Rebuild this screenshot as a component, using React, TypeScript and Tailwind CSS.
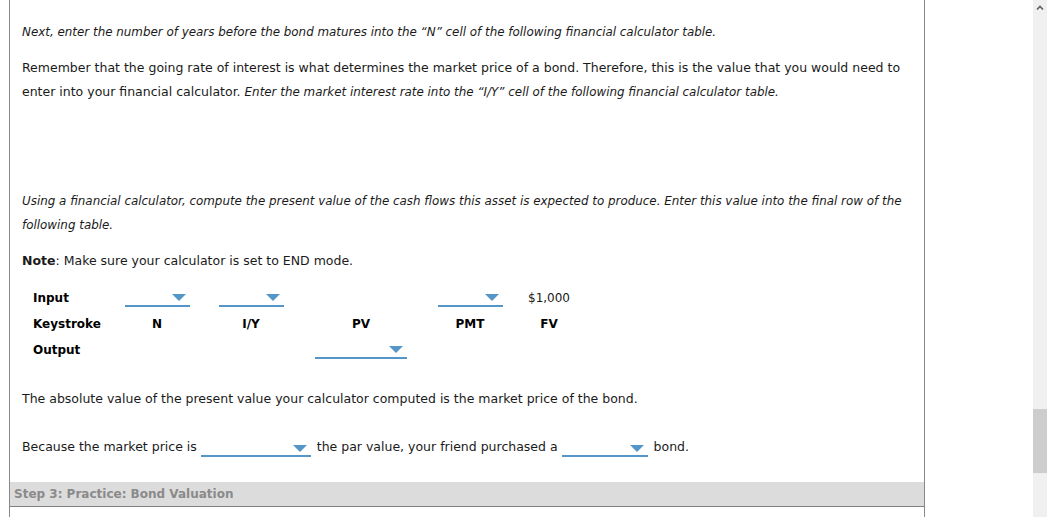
import React from 'react';

const font = { fontFamily: '"DejaVu Sans", Verdana, sans-serif' };

function Caret() {
  return (
    <svg width="14" height="7" viewBox="0 0 14 7" className="shrink-0">
      <path d="M0 0 H14 L7 7 Z" fill="#5596c9" />
    </svg>
  );
}

// blank select drawn as an underline with a caret on the right
function Blank({ width }: { width: string }) {
  return (
    <span className={`inline-flex items-start justify-end h-[17px] border-b-2 border-[#5596c9] pr-[4px] pt-[4px] align-[-5px] ${width}`}>
      <Caret />
    </span>
  );
}

function InlineBlank({ width }: { width: string }) {
  return (
    <span className={`flex items-start justify-end mt-[10px] h-[12px] border-b-2 border-[#5596c9] pr-[4px] ${width}`}>
      <Caret />
    </span>
  );
}

function Label({ children }: { children: React.ReactNode }) {
  return <div className="flex items-center h-[26px] text-[12px] font-bold text-black">{children}</div>;
}

function Cell({ children }: { children?: React.ReactNode }) {
  return <div className="flex items-center justify-center h-[26px] text-[12px]">{children}</div>;
}

export default function App() {
  return (
    <div className="w-[1047px] h-[517px] flex bg-white overflow-hidden text-[#1a1a1a]" style={font}>
      <div className="ml-[9px] w-[916px] h-full border-l border-r border-[#888888] flex flex-col">
        <div className="pl-3 pt-[20px] text-[12.5px] leading-[24px]">
          <p className="italic text-[11.9px]">
            Next, enter the number of years before the bond matures into the {'\u201cN\u201d'} cell of the following financial calculator table.
          </p>
          <p className="mt-3">
            Remember that the going rate of interest is what determines the market price of a bond. Therefore, this is the value that you would need to
            <br />
            enter into your financial calculator.{' '}
            <i className="text-[11.9px] leading-[20px]">Enter the market interest rate into the {'\u201cI/Y\u201d'} cell of the following financial calculator table.</i>
          </p>
          <p className="mt-[85px] italic text-[11.9px]">
            Using a financial calculator, compute the present value of the cash flows this asset is expected to produce. Enter this value into the final row of the following table.
          </p>
          <p className="mt-3">
            <span className="font-bold">Note</span>: Make sure your calculator is set to END mode.
          </p>

          <div className="mt-3 ml-[11px] grid grid-cols-[77px_94px_94px_126px_92px_66px]">
            <Label>Input</Label>
            <Cell><Blank width="w-[65px]" /></Cell>
            <Cell><Blank width="w-[65px]" /></Cell>
            <Cell />
            <Cell><Blank width="w-[65px]" /></Cell>
            <Cell>$1,000</Cell>

            <Label>Keystroke</Label>
            <Cell><span className="font-bold text-black">N</span></Cell>
            <Cell><span className="font-bold text-black">I/Y</span></Cell>
            <Cell><span className="font-bold text-black">PV</span></Cell>
            <Cell><span className="font-bold text-black">PMT</span></Cell>
            <Cell><span className="font-bold text-black">FV</span></Cell>

            <Label>Output</Label>
            <Cell />
            <Cell />
            <Cell><Blank width="w-[92px]" /></Cell>
            <Cell />
            <Cell />
          </div>

          <p className="mt-6">
            The absolute value of the present value your calculator computed is the market price of the bond.
          </p>
          <div className="mt-6 flex items-start whitespace-pre">
            <span>Because the market price is </span>
            <InlineBlank width="w-[110px] mr-[6px]" />
            <span>the par value, your friend purchased a </span>
            <InlineBlank width="w-[86px] mr-[6px]" />
            <span>bond.</span>
          </div>
        </div>

        <div className="mt-auto mb-[10px] h-[25px] bg-[#dcdcdc] border-b border-[#808080] flex items-center pl-1 text-[12px] font-bold text-[#8a8a8a]">
          Step 3: Practice: Bond Valuation
        </div>
      </div>

      <div className="flex-1" />

      <div className="w-[14px] h-full bg-[#f0f0f0] flex flex-col">
        <div className="h-[14px] flex items-center justify-center">
          <svg width="8" height="5" viewBox="0 0 8 5">
            <path d="M1 4.5 L4 1.5 L7 4.5" stroke="#606060" strokeWidth="1.6" fill="none" />
          </svg>
        </div>
        <div className="mt-[395px] h-[64px] bg-[#cdcdcd]" />
      </div>
    </div>
  );
}
